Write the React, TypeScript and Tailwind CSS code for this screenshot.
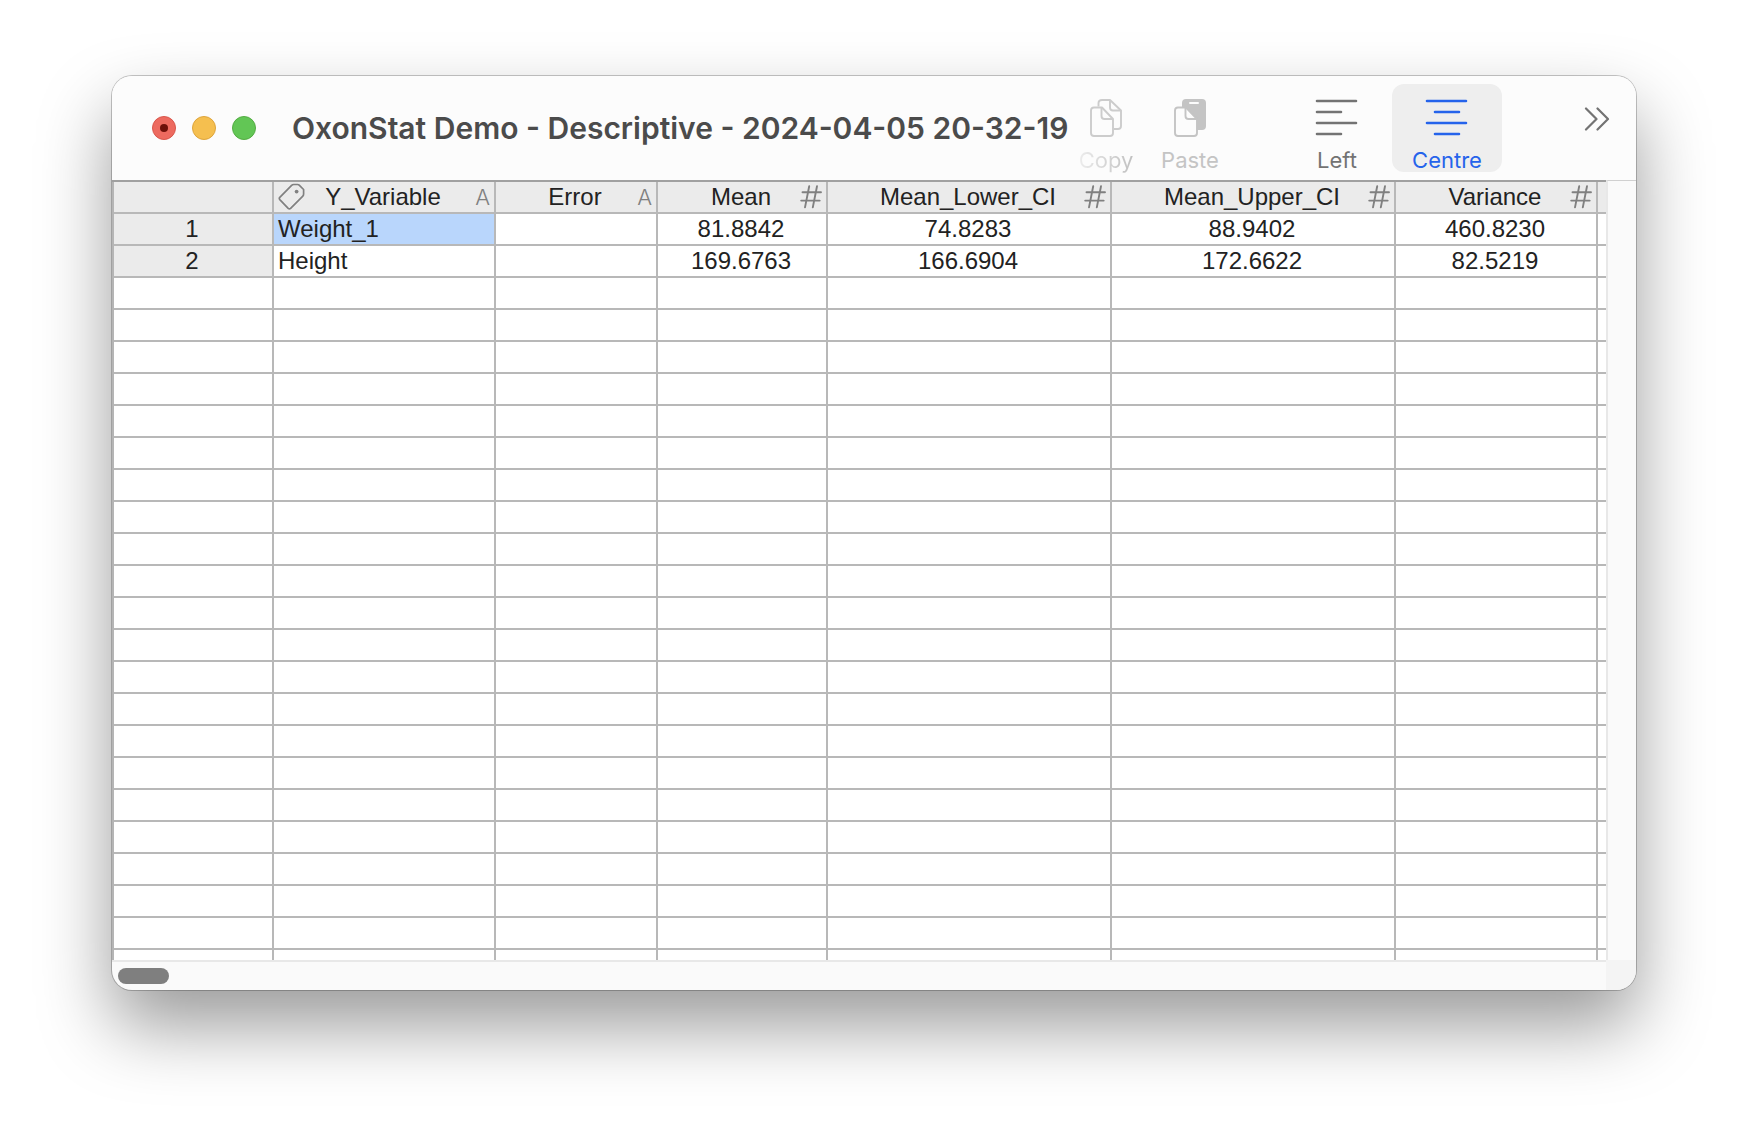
import type { ReactNode } from "react";

type Column = {
  name: string;
  kind: "text" | "number";
  tagged?: boolean;
};

const columns: Column[] = [
  { name: "Y_Variable", kind: "text", tagged: true },
  { name: "Error", kind: "text" },
  { name: "Mean", kind: "number" },
  { name: "Mean_Lower_CI", kind: "number" },
  { name: "Mean_Upper_CI", kind: "number" },
  { name: "Variance", kind: "number" },
];

const rows = [
  ["Weight_1", "", "81.8842", "74.8283", "88.9402", "460.8230"],
  ["Height", "", "169.6763", "166.6904", "172.6622", "82.5219"],
];

const EMPTY_ROWS = 60;

function TagIcon() {
  return (
    <svg
      className="h-7 w-7"
      viewBox="0 0 28 28"
      fill="none"
      stroke="currentColor"
      strokeWidth="1.7"
      strokeLinejoin="round"
    >
      <path d="M13.6 2.4 1.8 14.4Q0.8 15.5 1.8 16.6L10.2 25.4Q11.4 26.5 12.6 25.4L24.6 13.4Q25.6 12.4 25.6 11V6.5L21.2 2.1Q20.6 1.500 19.6 1.500H16Q14.6 1.400 13.6 2.400Z" />
      <circle cx="18.6" cy="8.600" r="1.900" fill="currentColor" stroke="none" />
    </svg>
  );
}

function HashIcon() {
  return (
    <svg
      className="h-6 w-6"
      viewBox="0 0 24 24"
      fill="none"
      stroke="currentColor"
      strokeWidth="1.9"
      strokeLinecap="round"
    >
      <path d="M11.2 1.2 7 22.4M19 1.2 14.800 22.4M4.500 7.200H23M3.200 15.600H21.700" />
    </svg>
  );
}

function CopyIcon() {
  return (
    <svg
      className="h-10 w-8"
      viewBox="0 0 32 40"
      fill="none"
      stroke="currentColor"
      strokeWidth="1.9"
      strokeLinejoin="round"
    >
      <path d="M8.500 8.500V5Q8.500 2 12 2H20L31 12.500V28Q31 31 28 31H24" />
      <path d="M20 2V9.500Q20 12.500 23 12.500H31" />
      <path d="M4 9.500H12L23 21V35Q23 38 20 38H4Q1 38 1 35V12.500Q1 9.500 4 9.500Z" />
      <path d="M11.500 9.500V18Q11.500 21 14.500 21H23" />
    </svg>
  );
}

function PasteIcon() {
  return (
    <svg
      className="h-10 w-8"
      viewBox="0 0 32 40"
      fill="none"
      stroke="currentColor"
      strokeWidth="1.9"
      strokeLinejoin="round"
    >
      <rect x="8" y="1" width="24" height="31" rx="4" fill="currentColor" stroke="none" />
      <path d="M16 5H24" stroke="#fcfcfc" strokeWidth="2" strokeLinecap="round" />
      <path
        d="M4 9.500H12L23 21V35Q23 38 20 38H4Q1 38 1 35V12.500Q1 9.500 4 9.500Z"
        fill="#fcfcfc"
      />
      <path d="M11.500 9.500V18Q11.500 21 14.500 21H23" />
    </svg>
  );
}

function AlignIcon({ d }: { d: string }) {
  return (
    <svg
      className="h-10 w-11"
      viewBox="0 0 44 40"
      fill="none"
      stroke="currentColor"
      strokeWidth="2.6"
      strokeLinecap="round"
    >
      <path d={d} />
    </svg>
  );
}

function ToolButton({
  label,
  className,
  disabled,
  pressed,
  children,
}: {
  label: ReactNode;
  className: string;
  disabled?: boolean;
  pressed?: boolean;
  children: ReactNode;
}) {
  return (
    <button
      type="button"
      disabled={disabled}
      aria-pressed={pressed}
      className={`flex h-[88px] shrink-0 flex-col items-center justify-between rounded-xl pt-3.5 text-[22px] leading-6 ${className}`}
    >
      {children}
      <span>{label}</span>
    </button>
  );
}

function TitleBar() {
  return (
    <header className="flex h-[104px] shrink-0 items-start bg-[#fcfcfc] pt-2 pl-10 font-['Inter',sans-serif]">
      <div className="flex h-[88px] items-center gap-4">
        <button
          type="button"
          aria-label="Close"
          className="flex size-6 items-center justify-center rounded-full border border-[#d9574c] bg-[#ed6a5f]"
        >
          <span className="size-2 rounded-full bg-[#6e1009]" />
        </button>
        <button
          type="button"
          aria-label="Minimise"
          className="size-6 rounded-full border border-[#dea53c] bg-[#f5bf4f]"
        />
        <button
          type="button"
          aria-label="Zoom"
          className="size-6 rounded-full border border-[#54ac43] bg-[#62c655]"
        />
      </div>

      <h1 className="ml-9 flex h-[88px] min-w-0 flex-1 items-center text-3xl font-semibold whitespace-nowrap text-[#4b4b4b]">
        OxonStat Demo - Descriptive - 2024-04-05 20-32-19
      </h1>

      <div className="flex shrink-0 items-center pr-6">
        <ToolButton
          disabled
          className="w-[84px] text-[#cccccc]"
          label={
            <span className="bg-linear-to-r from-[#ececec] to-[#c0c0c0] bg-clip-text text-transparent">
              Copy
            </span>
          }
        >
          <CopyIcon />
        </ToolButton>
        <ToolButton disabled className="w-[84px] text-[#c4c4c4]" label="Paste">
          <PasteIcon />
        </ToolButton>
        <ToolButton className="ml-[50px] w-[110px] text-[#737373]" label="Left">
          <AlignIcon d="M2 3H41M2 14H26M2 25H41M2 36H26" />
        </ToolButton>
        <ToolButton
          pressed
          className="w-[110px] bg-[#eeeeee] text-[#2563eb]"
          label="Centre"
        >
          <AlignIcon d="M2 3H41M10 14H34M2 25H41M10 36H34" />
        </ToolButton>
        <button
          type="button"
          aria-label="More toolbar items"
          className="ml-[82px] flex h-[70px] items-center self-start text-[#737373]"
        >
          <svg
            className="h-6 w-7"
            viewBox="0 0 28 24"
            fill="none"
            stroke="currentColor"
            strokeWidth="2.2"
            strokeLinecap="round"
            strokeLinejoin="round"
          >
            <path d="M2 1.500 12.500 12 2 22.500M13.500 1.500 24 12 13.500 22.500" />
          </svg>
        </button>
      </div>
    </header>
  );
}

function ResultsTable() {
  return (
    <table className="w-[1692px] table-fixed border-separate border-spacing-0 border-l-2 border-[#b5b5b5] text-2xl leading-[30px] text-[#222222] [&_td]:h-8 [&_td]:border-r-2 [&_td]:border-b-2 [&_td]:border-[#b8b8b8] [&_th]:h-8 [&_th]:border-r-2 [&_th]:border-b-2 [&_th]:border-[#b8b8b8]">
      <colgroup>
        <col className="w-40" />
        <col className="w-[222px]" />
        <col className="w-[162px]" />
        <col className="w-[170px]" />
        <col className="w-[284px]" />
        <col className="w-[284px]" />
        <col className="w-[202px]" />
        <col />
      </colgroup>
      <thead className="bg-[#ebebeb]">
        <tr>
          <td className="p-0" />
          {columns.map((column) => (
            <th key={column.name} scope="col" className="p-0 font-normal">
              <div className="grid grid-cols-[1fr_auto_1fr] items-center pr-1 pl-0.5">
                <span className="h-7 pl-0.5 text-[#808080]">
                  {column.tagged && <TagIcon />}
                </span>
                <span>{column.name}</span>
                <span className="flex justify-end text-[#808080]">
                  {column.kind === "text" ? (
                    <span className="font-['Inter',sans-serif] text-[22px] font-light">
                      A
                    </span>
                  ) : (
                    <HashIcon />
                  )}
                </span>
              </div>
            </th>
          ))}
          <td className="p-0" />
        </tr>
      </thead>
      <tbody>
        {rows.map((row, r) => (
          <tr key={row[0]}>
            <th scope="row" className="bg-[#ebebeb] py-0 pr-0.5 pl-0 font-normal">
              {r + 1}
            </th>
            {row.map((value, c) => (
              <td
                key={columns[c].name}
                className={
                  c === 0
                    ? `px-1 py-0 ${r === 0 ? "bg-[#b9d6fc]" : ""}`
                    : "py-0 pr-0.5 pl-0 text-center"
                }
              >
                {value}
              </td>
            ))}
            <td className="p-0" />
          </tr>
        ))}
        {Array.from({ length: EMPTY_ROWS }, (_, r) => (
          <tr key={r}>
            {Array.from({ length: columns.length + 2 }, (_, c) => (
              <td key={c} className="p-0" />
            ))}
          </tr>
        ))}
      </tbody>
    </table>
  );
}

export default function App() {
  return (
    <div className="flex h-screen flex-col overflow-hidden bg-white px-28 pt-[76px] pb-[148px] font-['Liberation_Sans',sans-serif]">
      <main className="flex min-h-0 flex-1 flex-col overflow-hidden rounded-[20px] bg-[#fafafa] shadow-[0_0_0_1px_rgba(0,0,0,0.22),0_36px_72px_rgba(0,0,0,0.4)]">
        <TitleBar />
        <div className="flex min-h-0 flex-1">
          <div className="min-w-0 flex-1 overflow-hidden border-t-2 border-[#a0a0a0] bg-white">
            <ResultsTable />
          </div>
          {/* Vertical scroll track */}
          <div className="w-[30px] border-t border-l-2 border-t-[#d0d0d0] border-l-[#e8e8e8] bg-[#fafafa]" />
        </div>
        {/* Horizontal scroll track */}
        <div className="flex h-[30px] shrink-0">
          <div className="flex flex-1 items-center border-t-2 border-[#e8e8e8] pl-1.5">
            <div className="h-4 w-[51px] rounded-full bg-[#7f7f7f]" />
          </div>
          <div className="w-[30px] bg-[#f4f4f4]" />
        </div>
      </main>
    </div>
  );
}
